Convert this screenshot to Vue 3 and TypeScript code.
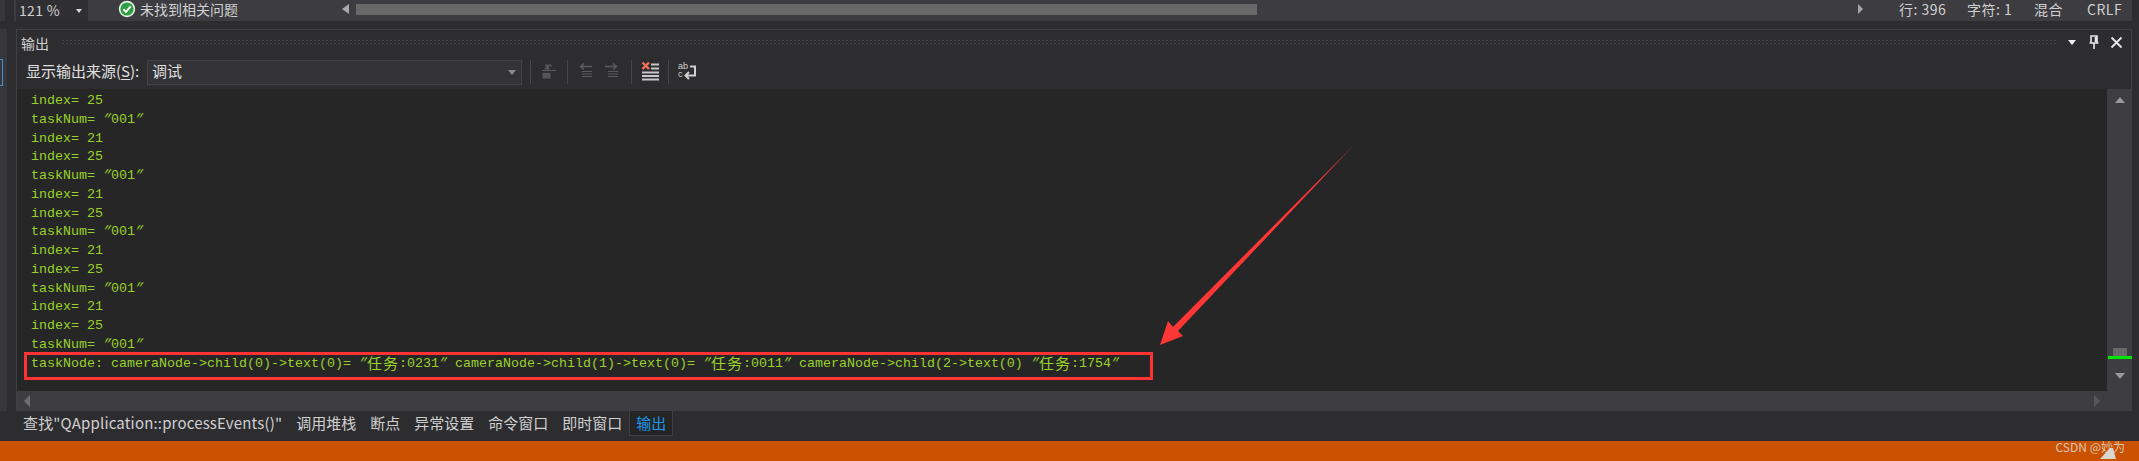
<script setup lang="ts">
interface Seg { t: string; k: string }
const raw: string[] = [
  'index= 25', 'taskNum= "001"', 'index= 21',
  'index= 25', 'taskNum= "001"', 'index= 21',
  'index= 25', 'taskNum= "001"', 'index= 21',
  'index= 25', 'taskNum= "001"', 'index= 21',
  'index= 25', 'taskNum= "001"',
  'taskNode: cameraNode->child(0)->text(0)= "任务:0231" cameraNode->child(1)->text(0)= "任务:0011" cameraNode->child(2->text(0) "任务:1754"'
]
function split(line: string): Seg[] {
  const parts = line.match(/"|[\u4e00-\u9fff]+|[^"\u4e00-\u9fff]+/g) ?? []
  return parts.map((t) => ({ t, k: t === '"' ? 'q' : /[\u4e00-\u9fff]/.test(t) ? 'c' : 'a' }))
}
const lines = raw.map(split)
const tabs = ['调用堆栈', '断点', '异常设置', '命令窗口', '即时窗口']
</script>

<template>
  <div class="page">
    <div class="top-row">
      <div class="top-gutter"><div class="gutter-strip"></div></div>
      <div class="status">
        <div class="zoom-box"><span>121 %</span><i class="tri-down small"></i></div>
        <svg class="ok" width="18" height="18" viewBox="0 0 18 18">
          <circle cx="9" cy="9" r="8.2" fill="#e8f3e6" />
          <circle cx="9" cy="9" r="6.6" fill="#2f9e44" />
          <path d="M5.4 9.2 8 11.8 12.6 6.4" fill="none" stroke="#fff" stroke-width="2" />
        </svg>
        <span class="ok-text">未找到相关问题</span>
        <div class="hbar">
          <i class="tri-left wide"></i>
          <div class="hbar-track"><div class="hbar-thumb"></div></div>
          <i class="tri-right"></i>
        </div>
        <div class="meta"><span class="m1">行: 396</span><span class="m2">字符: 1</span><span class="m3">混合</span><span class="m4">CRLF</span></div>
      </div>
    </div>

    <div class="middle">
      <div class="left-rail"><div class="rail-strip"><div class="rail-mark"></div></div></div>
      <div class="panel">
        <div class="title-row">
          <span class="title">输出</span>
          <div class="grip"></div>
          <div class="title-icons">
            <i class="tri-down white"></i>
            <svg width="12" height="14" viewBox="0 0 12 14"><path d="M3 1H9V8H3ZM1.5 8H10.5M6 8V14M7.5 2V7" fill="none" stroke="#e8e8e8" stroke-width="1.6" /></svg>
            <svg width="13" height="13" viewBox="0 0 13 13"><path d="M1.5 1.5 11.5 11.5M11.5 1.5 1.5 11.5" stroke="#e8e8e8" stroke-width="1.8" /></svg>
          </div>
        </div>
        <div class="toolbar">
          <span class="src-label">显示输出来源(<u>S</u>):</span>
          <div class="combo"><span>调试</span><i class="tri-down dim"></i></div>
          <i class="sep first"></i>
          <svg class="tb" width="20" height="20" viewBox="0 0 20 20">
            <path d="M9 10V5.500C9 3.500 12 3.500 12 5.500M6.500 3.500 9 6 6 8" fill="none" stroke="#5b5b5b" stroke-width="1.600" />
            <path d="M3 9.500H17M4 12.500H11V17H4Z" fill="#555" stroke="#5b5b5b" />
          </svg>
          <i class="sep"></i>
          <svg class="tb" width="20" height="20" viewBox="0 0 20 20">
            <path d="M16 5.500H5M8 2.500 4.500 5.500 8 8.500" fill="none" stroke="#5b5b5b" stroke-width="1.600" />
            <path d="M6 10.500H16M6 13H16M6 15.500H16" stroke="#5b5b5b" />
          </svg>
          <svg class="tb second" width="20" height="20" viewBox="0 0 20 20">
            <path d="M3 5.500H14M11 2.500 14.500 5.500 11 8.500" fill="none" stroke="#5b5b5b" stroke-width="1.600" />
            <path d="M6 10.500H16M6 13H16M6 15.500H16" stroke="#5b5b5b" />
          </svg>
          <i class="sep"></i>
          <svg class="tb" width="20" height="20" viewBox="0 0 20 20">
            <path d="M11 3.500H19M11 7.500H19" stroke="#c8c8c8" stroke-width="2" />
            <path d="M2 11.500H19M2 15H19M2 18.500H19" stroke="#c8c8c8" stroke-width="2" />
            <path d="M2.500 1.500 9 8M9 1.500 2.500 8" stroke="#f0705a" stroke-width="2.400" />
          </svg>
          <i class="sep"></i>
          <svg class="tb" width="20" height="20" viewBox="0 0 20 20">
            <path d="M13 5.500H18V14.500H9M12 11 8.500 14.500 12 18" fill="none" stroke="#d0d0d0" stroke-width="2" />
            <text x="1" y="8" class="abc">ab</text>
            <text x="1" y="16" class="abc">c</text>
          </svg>
        </div>
        <div class="editor">
          <div class="editor-main">
            <div class="log">
              <div v-for="(segs, i) in lines" :key="i" class="line">
                <span v-for="(s, j) in segs" :key="j" :class="s.k">{{ s.t }}</span>
              </div>
            </div>
            <div class="h-scroll">
              <i class="tri-left dim"></i>
              <i class="tri-right darker"></i>
            </div>
          </div>
          <div class="v-scroll">
            <i class="tri-up"></i>
            <div class="v-thumb"><div class="v-mark"></div></div>
            <i class="tri-down grey"></i>
          </div>
        </div>
      </div>
    </div>

    <div class="tabs">
      <span class="tab find">查找"QApplication::processEvents()"</span>
      <span v-for="t in tabs" :key="t" class="tab">{{ t }}</span>
      <span class="tab active">输出</span>
    </div>
    <div class="orange">
      <span class="mark">CSDN @妙为</span>
    </div>

    <svg class="annot" width="2139" height="461" viewBox="0 0 2139 461">
      <rect x="25.500" y="353.500" width="1126" height="25" fill="none" stroke="#ff3334" stroke-width="3" />
      <polygon points="1354,145 1178,331 1183,336 1160,345 1168,321 1173,327" fill="#ff3636" />
      <polygon points="2100,459 2110,448 2113,448 2116,459" fill="#d9d6d0" />
    </svg>
  </div>
</template>

<style scoped>
.page {
  position: relative;
  width: 2139px;
  height: 461px;
  overflow: hidden;
  display: flex;
  flex-direction: column;
  background: #2d2d30;
  color: #d0d0d0;
  font-family: "Noto Sans CJK SC", "Liberation Sans", sans-serif;
  font-size: 14px;
}
i { display: block; font-style: normal; flex: none; }
.top-row { display: flex; height: 29px; flex: none; }
.top-gutter { width: 14px; flex: none; }
.gutter-strip { width: 5px; height: 21px; background: #38383c; }
.status {
  width: 2118px;
  height: 21px;
  background: #3c3c41;
  display: flex;
  align-items: center;
  position: relative;
}
.zoom-box {
  width: 72px;
  height: 21px;
  margin-left: 2px;
  background: #2f2f33;
  display: flex;
  align-items: center;
  justify-content: space-between;
  padding: 0 6px 0 3px;
  box-sizing: border-box;
  font-size: 14px;
}
.zoom-box span { margin-top: -2px; letter-spacing: 0.3px; }
.ok { margin-left: 30px; margin-top: -4px; flex: none; }
.ok-text { margin-left: 4px; margin-top: -4px; width: 202px; flex: none; white-space: nowrap; }
.hbar { display: flex; align-items: center; width: 1522px; flex: none; height: 21px; margin-top: -3px; }
.hbar-track { width: 1502px; margin: 0 0 0 7px; }
.hbar-thumb { width: 901px; height: 11px; background: #686868; }
.meta { display: flex; font-size: 14px; margin-top: -4px; white-space: nowrap; letter-spacing: 0.5px; }
.m1 { margin-left: 35px; width: 68px; }
.m2 { width: 67px; }
.m3 { width: 53px; }
.tri-down { width: 0; height: 0; border-left: 5px solid transparent; border-right: 5px solid transparent; border-top: 5px solid #d0d0d0; }
.tri-down.small { border-width: 4px 3.500px 0; border-top-color: #d8d8d8; }
.tri-down.white { border-width: 5px 4.500px 0; border-top-color: #f0f0f0; }
.tri-down.dim { border-width: 5px 4px 0; border-top-color: #8a8a8a; }
.tri-down.grey { border-width: 6px 5px 0; border-top-color: #999; margin-top: 15px; }
.tri-up { width: 0; height: 0; border-left: 5px solid transparent; border-right: 5px solid transparent; border-bottom: 6px solid #999; margin-top: 8px; }
.tri-left { width: 0; height: 0; border-top: 5px solid transparent; border-bottom: 5px solid transparent; border-right: 5px solid #a8a8a8; }
.tri-left.wide { border-right-width: 7px; }
.tri-right { width: 0; height: 0; border-top: 5px solid transparent; border-bottom: 5px solid transparent; border-left: 5px solid #a8a8a8; }
.tri-left.dim { border-right-color: #6e6e72; border-width: 6px 6px 6px 0; }
.tri-right.darker { border-left-color: #57575c; border-width: 6px 0 6px 6px; }

.middle { display: flex; height: 382px; flex: none; }
.left-rail { width: 16px; flex: none; }
.rail-strip { width: 7px; height: 382px; background: #38383c; position: relative; }
.rail-mark { position: absolute; left: -1px; top: 30px; width: 2px; height: 25px; border: 1px solid #3d8fd6; }
.panel {
  width: 2116px;
  flex: none;
  border: 1px solid #3f3f46;
  border-bottom: none;
  box-sizing: border-box;
  display: flex;
  flex-direction: column;
}
.title-row { display: flex; align-items: center; height: 27px; flex: none; }
.title { margin-left: 4px; width: 40px; flex: none; line-height: 26px; margin-top: -1px; }
.grip {
  width: 1997px;
  height: 6px;
  flex: none;
  margin-top: -3px;
  background-image: radial-gradient(#46464a 1px, transparent 1px);
  background-size: 4px 3px;
}
.title-icons { display: flex; align-items: center; margin-left: 10px; margin-top: -3px; }
.title-icons svg:nth-child(2) { margin-left: 12px; }
.title-icons svg:nth-child(3) { margin-left: 10px; }
.toolbar { display: flex; align-items: center; height: 32px; flex: none; }
.src-label { margin-left: 9px; width: 121px; flex: none; font-size: 15px; color: #e0e0e0; white-space: nowrap; margin-top: -5px; }
.src-label u { text-underline-offset: 2px; }
.combo {
  width: 375px;
  height: 25px;
  flex: none;
  box-sizing: border-box;
  background: #333337;
  border: 1px solid #434346;
  display: flex;
  align-items: center;
  justify-content: space-between;
  padding: 0 5px 0 4px;
  font-size: 15px;
  color: #e0e0e0;
  margin-top: -2px;
}
.combo span { margin-top: -3px; }
.sep { width: 1px; height: 24px; background: #46464a; margin-top: -3px; }
.sep.first { margin-left: 8px; }
.tb { flex: none; margin: -4px 8px 0; }
.tb.second { margin: -4px 9px 0 -2px; }
.abc { font-family: "Liberation Sans", sans-serif; font-size: 9px; fill: #d0d0d0; }

.editor { flex: 1; display: flex; min-height: 0; }
.editor-main { width: 2090px; flex: none; display: flex; flex-direction: column; background: #262626; }
.log {
  flex: 1;
  padding: 3px 0 0 14px;
  box-sizing: border-box;
  font-family: "Liberation Mono", monospace;
  font-size: 13.333px;
  color: #9ad12a;
  white-space: pre;
}
.line { height: 18.750px; line-height: 18.750px; display: flex; align-items: center; }
.line .q { display: inline-block; transform: skewX(-32deg); transform-origin: 50% 32%; }
.line .c { font-family: "Noto Sans CJK SC", sans-serif; font-size: 15px; letter-spacing: 1px; line-height: 1; margin-top: -3px; }
.h-scroll {
  height: 20px;
  flex: none;
  background: #3e3e42;
  display: flex;
  align-items: center;
  justify-content: space-between;
  padding: 0 7px;
}
.v-scroll {
  width: 25px;
  flex: none;
  background: #3e3e42;
  display: flex;
  flex-direction: column;
  align-items: center;
  position: relative;
}
.v-thumb { width: 14px; height: 10px; background: #686868; margin-top: 245px; position: relative; }
.v-mark { position: absolute; left: -5px; top: 8px; width: 24px; height: 3px; background: #00e600; }

.tabs {
  height: 30px;
  flex: none;
  display: flex;
  align-items: flex-start;
  gap: 14px;
  padding-left: 23px;
  font-size: 15px;
  color: #d0d0d0;
}
.tab { line-height: 24px; white-space: nowrap; }
.tab.find { letter-spacing: 0.17px; }
.tab.active {
  color: #1c97ea;
  background: #252526;
  border: 1px solid #3f3f46;
  padding: 0 6px;
  margin-left: -7px;
  margin-top: -1px;
}
.orange {
  height: 20px;
  flex: none;
  background: #ca5100;
  display: flex;
  justify-content: flex-end;
  align-items: center;
}
.mark { font-size: 12px; color: #d8c4b4; margin-right: 14px; margin-top: -9px; line-height: 12px; white-space: nowrap; }
.annot { position: absolute; left: 0; top: 0; pointer-events: none; }
</style>
